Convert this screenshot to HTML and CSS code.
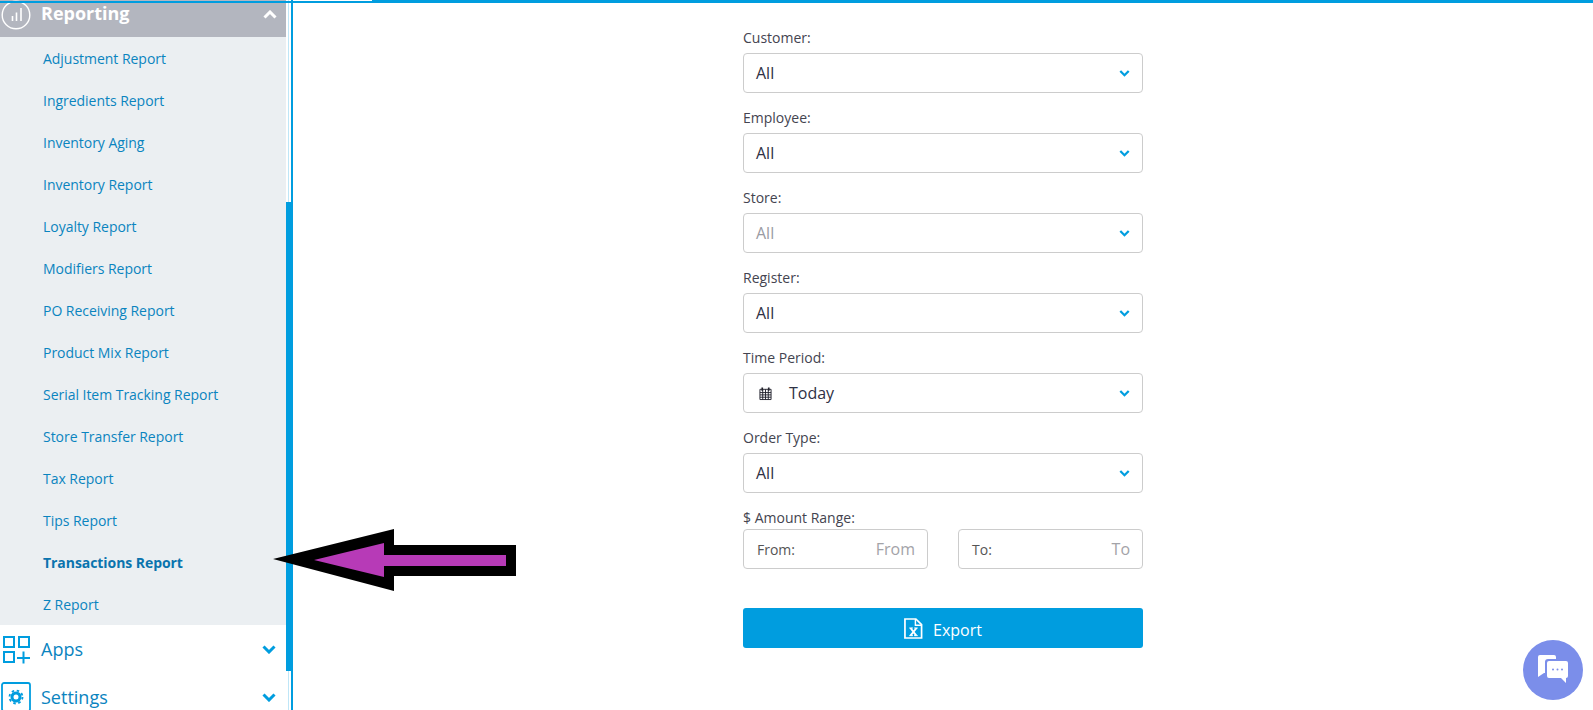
FILE: index.html
```html
<!DOCTYPE html>
<html lang="en">
<head>
<meta charset="utf-8">
<title>Transactions Report</title>
<link rel="stylesheet" href="styles.css">
</head>
<body>
<div class="top-line"><span class="top-a"></span><span class="top-b"></span></div>
<div class="app">
  <aside class="sidebar">
    <div class="nav">
      <div class="nav-head">
        <svg class="head-icon" viewBox="0 0 30 30" width="30" height="30"><circle cx="15" cy="15" r="13.800" fill="none" stroke="#fff" stroke-width="1.400"/><path d="M11.500 21v-5M15.500 21v-8.500M20 21V8" stroke="#fff" stroke-width="1.600" fill="none"/></svg>
        <span class="head-label">Reporting</span>
        <svg class="chev" viewBox="0 0 14 9" width="14" height="9"><path d="M1.500 7.500 7 2l5.500 5.500" fill="none" stroke="#fff" stroke-width="3"/></svg>
      </div>
      <ul class="sub">
        <li>Adjustment Report</li>
        <li>Ingredients Report</li>
        <li>Inventory Aging</li>
        <li>Inventory Report</li>
        <li>Loyalty Report</li>
        <li>Modifiers Report</li>
        <li>PO Receiving Report</li>
        <li>Product Mix Report</li>
        <li>Serial Item Tracking Report</li>
        <li>Store Transfer Report</li>
        <li>Tax Report</li>
        <li>Tips Report</li>
        <li class="active">Transactions Report</li>
        <li>Z Report</li>
      </ul>
      <div class="nav-row">
        <svg class="row-icon" viewBox="0 0 30 30" width="30" height="30"><g fill="none" stroke="#009ddf" stroke-width="2"><rect x="3" y="3" width="10" height="10"/><rect x="18" y="3" width="10" height="10"/><rect x="3" y="18" width="10" height="10"/><path d="M16 24h13M22.500 17.500v12"/></g></svg>
        <span class="row-label">Apps</span>
        <svg class="chev" viewBox="0 0 14 9" width="14" height="9"><path d="M1.500 1.500 7 7l5.500-5.500" fill="none" stroke="#009ddf" stroke-width="3"/></svg>
      </div>
      <div class="nav-row">
        <svg class="row-icon" viewBox="0 0 30 30" width="30" height="30"><rect x="1" y="1" width="28" height="28" rx="2" fill="none" stroke="#009ddf" stroke-width="1.800"/><circle cx="15" cy="15" r="4" fill="none" stroke="#009ddf" stroke-width="3"/><circle cx="15" cy="15" r="6.500" fill="none" stroke="#009ddf" stroke-width="1.800" stroke-dasharray="2.500 2.600"/></svg>
        <span class="row-label">Settings</span>
        <svg class="chev" viewBox="0 0 14 9" width="14" height="9"><path d="M1.500 1.500 7 7l5.500-5.500" fill="none" stroke="#009ddf" stroke-width="3"/></svg>
      </div>
    </div>
    <div class="track"><div class="thumb"></div></div>
  </aside>
  <main class="main">
    <form class="form">
      <div class="field">
        <label class="label">Customer:</label>
        <div class="select"><span class="value">All</span><svg class="caret" viewBox="0 0 12 8" width="11" height="7"><path d="M1.200 1.200 6 6l4.800-4.800" fill="none" stroke="#009ddf" stroke-width="2.600"/></svg></div>
      </div>
      <div class="field">
        <label class="label">Employee:</label>
        <div class="select"><span class="value">All</span><svg class="caret" viewBox="0 0 12 8" width="11" height="7"><path d="M1.200 1.200 6 6l4.800-4.800" fill="none" stroke="#009ddf" stroke-width="2.600"/></svg></div>
      </div>
      <div class="field">
        <label class="label">Store:</label>
        <div class="select"><span class="value muted">All</span><svg class="caret" viewBox="0 0 12 8" width="11" height="7"><path d="M1.200 1.200 6 6l4.800-4.800" fill="none" stroke="#009ddf" stroke-width="2.600"/></svg></div>
      </div>
      <div class="field">
        <label class="label">Register:</label>
        <div class="select"><span class="value">All</span><svg class="caret" viewBox="0 0 12 8" width="11" height="7"><path d="M1.200 1.200 6 6l4.800-4.800" fill="none" stroke="#009ddf" stroke-width="2.600"/></svg></div>
      </div>
      <div class="field">
        <label class="label">Time Period:</label>
        <div class="select">
          <svg class="cal" viewBox="0 0 14 15" width="13" height="15"><path d="M1 3h12v11H1zM1 6.500h12M1 9h12M1 11.500h12M4 3v11M7 3v11M10 3v11" fill="none" stroke="#22222c" stroke-width="1"/><path d="M3.500 1v3.500M10.500 1v3.500" stroke="#22222c" stroke-width="1.800"/></svg>
          <span class="value">Today</span>
          <svg class="caret" viewBox="0 0 12 8" width="11" height="7"><path d="M1.200 1.200 6 6l4.800-4.800" fill="none" stroke="#009ddf" stroke-width="2.600"/></svg>
        </div>
      </div>
      <div class="field">
        <label class="label">Order Type:</label>
        <div class="select"><span class="value">All</span><svg class="caret" viewBox="0 0 12 8" width="11" height="7"><path d="M1.200 1.200 6 6l4.800-4.800" fill="none" stroke="#009ddf" stroke-width="2.600"/></svg></div>
      </div>
      <div class="field-range">
        <label class="label label-range">$ Amount Range:</label>
        <div class="range">
          <div class="range-box"><span class="range-label">From:</span><span class="placeholder">From</span></div>
          <div class="range-box"><span class="range-label">To:</span><span class="placeholder">To</span></div>
        </div>
      </div>
      <button type="button" class="export">
        <svg viewBox="0 0 20 22" width="19" height="21"><path d="M1 1h11.500L18.500 7v14H1z" fill="none" stroke="#fff" stroke-width="1.800"/><path d="M12 1v6.500h6.500" fill="none" stroke="#fff" stroke-width="1.500"/><path d="M6.800 10.500l6.200 8M13.200 10.500l-6.400 8" fill="none" stroke="#fff" stroke-width="2"/><path d="M5.500 10.500h4M10.500 10.500h4M5.500 18.500h4M10.500 18.500h4" stroke="#fff" stroke-width="1"/></svg>
        <span class="export-text">Export</span>
      </button>
    </form>
  </main>
</div>
<svg class="arrow" viewBox="0 0 250 70" width="250" height="70"><path d="M0 30 121 0V16H243V47H121V62Z" fill="#000"/><path d="M41 31 111 14V26H233V37H111V48Z" fill="#b73ab7"/></svg>
<div class="chat">
  <svg viewBox="0 0 34 32" width="34" height="32"><path d="M2 3a2 2 0 0 1 2-2h14a2 2 0 0 1 2 2v2H12a3 3 0 0 0-3 3v11H8l-6 4z" fill="#fff"/><path d="M13 7h17a2 2 0 0 1 2 2v13a2 2 0 0 1-2 2v5l-5-5H13a2 2 0 0 1-2-2V9a2 2 0 0 1 2-2z" fill="#fff"/><circle cx="17" cy="15.500" r="1" fill="#7b8eea"/><circle cx="21.500" cy="15.500" r="1" fill="#7b8eea"/><circle cx="26" cy="15.500" r="1" fill="#7b8eea"/></svg>
</div>
</body>
</html>
```
FILE: styles.css
```css
* { box-sizing: border-box; }
html, body { margin: 0; padding: 0; height: 710px; overflow: hidden; background: #fff; }
body { font-family: "Open Sans", sans-serif; color: #33333f; position: relative; }

.top-line { position: absolute; top: 0; left: 0; right: 0; height: 3px; z-index: 3; pointer-events: none; }
.top-a { position: absolute; left: 0; top: 1px; width: 372px; height: 2px; background: #009ddf; }
.top-b { position: absolute; left: 372px; right: 0; top: 0; height: 3px; background: #009ddf; }

.app { display: flex; height: 710px; }
.sidebar { display: flex; width: 293px; flex: none; border-right: 2px solid #009ddf; height: 710px; overflow: hidden; }
.nav { width: 286px; flex: none; }
.track { flex: 1; background: linear-gradient(90deg, #fff 0 2px, #bfe6f7 2px 3px, #fff 3px); }
.thumb { margin-top: 202px; height: 469px; width: 6px; background: #009ddf; }

.nav-head { height: 37px; background: #b3b6bf; display: flex; align-items: center; padding-right: 9px; overflow: hidden; }
.head-icon { margin: -8px 0 0 1px; flex: none; }
.head-label { font-size: 18px; font-weight: 700; color: #fff; margin: -11px 0 0 10px; flex: 1; }
.nav-head .chev { margin-top: -9px; }

.sub { list-style: none; margin: 0; padding: 0; background: #ebeff2; height: 588px; }
.sub li { height: 42px; line-height: 44px; padding-left: 43px; font-size: 14px; letter-spacing: -.03px; color: #0a84bf; white-space: nowrap; }
.sub li.active { font-weight: 700; letter-spacing: -.06px; color: #0a74ae; }

.nav-row { height: 48px; display: flex; align-items: center; padding-right: 10px; color: #0a84bf; }
.row-icon { flex: none; margin-left: 1px; }
.row-label { font-size: 18px; margin-left: 10px; flex: 1; }

.main { flex: 1; display: flex; justify-content: center; }
.form { width: 400px; padding-top: 28px; }
.field { height: 80px; }
.label { display: block; font-size: 14px; line-height: 20px; height: 25px; color: #444450; }
.label-range { height: 21px; }
.select { height: 40px; border: 1px solid #ccc; border-radius: 4px; display: flex; align-items: center; padding: 0 12px; background: #fff; }
.value { font-size: 16px; flex: 1; color: #2f3145; }
.muted { color: #9a9ba3; }
.caret { flex: none; }
.cal { flex: none; margin: 0 17px 0 3px; }

.range { display: flex; justify-content: space-between; }
.range-box { width: 185px; height: 40px; border: 1px solid #ccc; border-radius: 4px; display: flex; align-items: center; justify-content: space-between; padding: 0 12px 0 13px; }
.range-label { font-size: 14px; color: #555; }
.placeholder { font-size: 16px; color: #a3a3a8; }

.export { display: flex; align-items: center; justify-content: center; gap: 10px; width: 400px; height: 40px; margin-top: 39px; background: #009ddf; border: 0; border-radius: 3px; color: #fff; font-family: inherit; font-size: 16px; padding: 0; }
.export-text { position: relative; top: 2px; }

.arrow { position: absolute; left: 273px; top: 529px; z-index: 4; }
.chat { position: absolute; left: 1523px; top: 640px; width: 60px; height: 60px; border-radius: 50%; background: #7b8eea; display: flex; align-items: center; justify-content: center; z-index: 4; }
```
